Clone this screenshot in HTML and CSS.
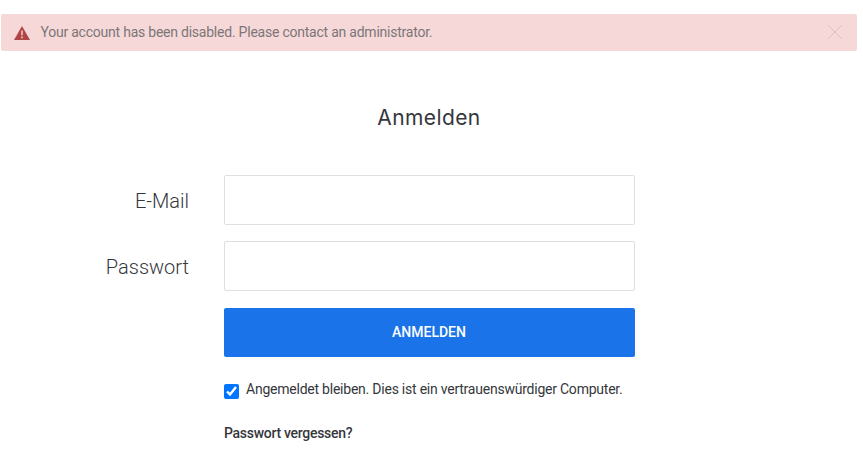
FILE: index.html
```html
<!DOCTYPE html>
<html lang="de">
<head>
<meta charset="utf-8">
<title>Anmelden</title>
<link rel="stylesheet" href="styles.css">
</head>
<body>
<div class="alert" role="alert">
  <svg class="alert-icon" viewBox="0 0 16 14"><path fill="#b04545" d="M8 0 16 14H0Z"/><path fill="#e3aaaa" d="M7 4.5v4.7h2V4.5ZM7 10.5v1.8h2v-1.8Z"/></svg>
  <span class="alert-text">Your account has been disabled. Please contact an administrator.</span>
  <svg class="close" viewBox="0 0 14 14"><path d="M.5.5l13 13M13.5.5l-13 13"/></svg>
</div>
<h1>Anmelden</h1>
<form class="login">
  <label for="email">E-Mail</label>
  <input class="field" id="email" type="email">
  <label for="password">Passwort</label>
  <input class="field" id="password" type="password">
  <button class="submit" type="button">ANMELDEN</button>
  <label class="remember"><input type="checkbox" checked><span>Angemeldet bleiben. Dies ist ein vertrauenswürdiger Computer.</span></label>
  <a class="forgot">Passwort vergessen?</a>
</form>
</body>
</html>
```

FILE: styles.css
```css
* { box-sizing: border-box; }
body {
  margin: 0;
  padding-top: 14px;
  background: #fff;
  color: #35373c;
  font-family: Roboto, sans-serif;
  font-size: 14px;
  letter-spacing: -0.23px;
}
.alert {
  display: flex;
  align-items: center;
  height: 37px;
  margin: 0 6px 0 1px;
  padding: 0 15px 0 13px;
  border-radius: 2px;
  background: #f6d8d9;
  color: #7c7676;
}
.alert-icon { width: 16px; height: 14px; margin: 1px 10.5px 0 0; }
.alert-text { flex: 1; margin-top: -1px; }
.close { width: 14px; height: 14px; margin-top: -1px; fill: none; stroke: #d9c0c1; stroke-width: 1; }
h1 {
  margin: 53px 5px 0 0;
  font-family: Inter, sans-serif;
  font-size: 21px;
  font-weight: 400;
  letter-spacing: 0.4px;
  line-height: 28px;
  text-align: center;
}
.login {
  display: grid;
  grid-template-columns: 189px 411px;
  column-gap: 35px;
  row-gap: 16px;
  margin-top: 43px;
}
.login > label:not(.remember) {
  align-self: center;
  padding-top: 1px;
  text-align: right;
  font-size: 20px;
  font-weight: 300;
  letter-spacing: 0;
}
.field {
  width: 100%;
  height: 50px;
  border: 1px solid #dfdfdf;
  border-radius: 2px;
}
.submit {
  grid-column: 2;
  height: 49px;
  margin-top: 1px;
  padding: 0 1px 1px 0;
  border: 0;
  border-radius: 2px;
  background: #1a73e8;
  color: #fff;
  font: 500 14px Roboto, sans-serif;
  letter-spacing: 0;
}
.remember {
  grid-column: 2;
  display: flex;
  align-items: center;
  height: 32px;
}
.remember input { width: 15px; height: 15px; margin: 4px 7px 0 0; }
.forgot { grid-column: 2; margin-top: 4px; font-weight: 500; letter-spacing: -0.29px; }
```
